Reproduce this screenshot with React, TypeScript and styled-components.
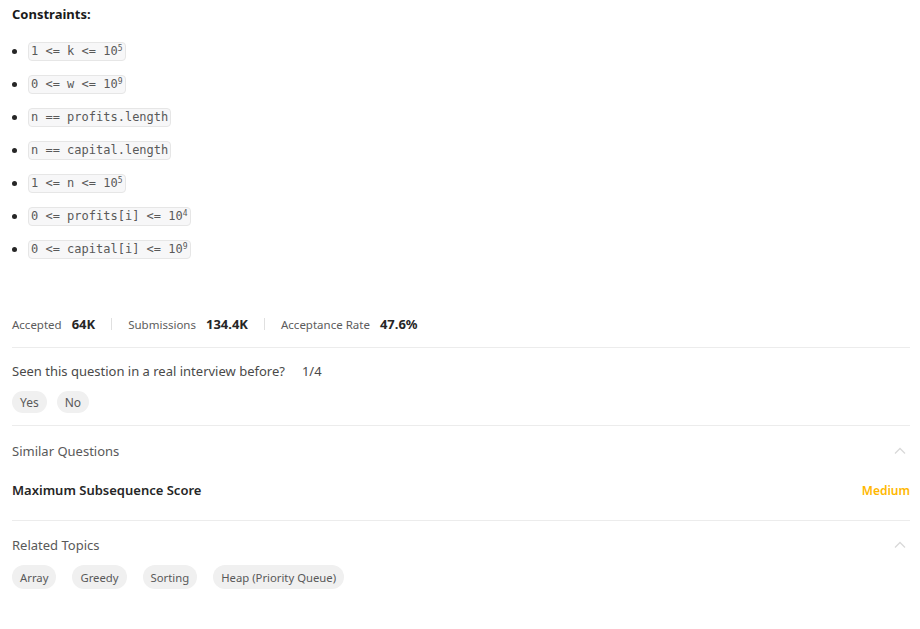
import React from "react";
import styled, { createGlobalStyle } from "styled-components";

const Global = createGlobalStyle`
  html, body { margin: 0; padding: 0; background: #fff; }
  body { font-family: "Noto Sans", "Open Sans", sans-serif; color: #262626; }
`;

const Page = styled.div`
  padding: 5px 10px 0 12px;
  width: 920px;
  box-sizing: border-box;
`;

const Heading = styled.div`
  font-weight: 700;
  font-size: 13px;
  line-height: 18px;
  color: #1a1a1a;
`;

const List = styled.ul`
  list-style: none;
  margin: 18px 0 0;
  padding: 0;
  display: flex;
  flex-direction: column;
  gap: 13px;
`;

const Item = styled.li`
  display: flex;
  align-items: center;
  height: 20px;
  &::before {
    content: "";
    width: 5px;
    height: 5px;
    border-radius: 50%;
    background: #262626;
    margin: 0 11px 0 0;
  }
`;

const Code = styled.code`
  font-family: "DejaVu Sans Mono", monospace;
  font-size: 12px;
  line-height: 17px;
  color: #595959;
  background: #f7f7f8;
  border: 1px solid #e6e6e6;
  border-radius: 4px;
  padding: 0 2px;
  sup { font-size: 8px; vertical-align: 4px; line-height: 0; }
`;

const Stats = styled.div`
  margin-top: 54px;
  display: flex;
  align-items: center;
  height: 22px;
`;

const Stat = styled.div`
  display: flex;
  align-items: baseline;
  gap: 10px;
`;

const StatLabel = styled.span`
  font-size: 11.5px;
  color: #5c5c5c;
`;

const StatValue = styled.span`
  font-size: 13px;
  font-weight: 700;
  color: #262626;
`;

const Sep = styled.div`
  width: 1px;
  height: 12px;
  background: #e0e0e0;
  margin: 0 16px;
`;

const Divider = styled.div`
  height: 1px;
  background: #ececec;
`;

const Section = styled.div<{ $pt: number; $pb: number }>`
  padding: ${(p) => p.$pt}px 0 ${(p) => p.$pb}px;
`;

const Question = styled.div`
  font-size: 13px;
  color: #4a4a4a;
  line-height: 20px;
  display: flex;
  gap: 17px;
`;

const Pills = styled.div<{ $gap: number }>`
  display: flex;
  gap: ${(p) => p.$gap}px;
  margin-top: 10px;
`;

const Pill = styled.span<{ $h: number; $px: number; $fs: number }>`
  display: inline-flex;
  align-items: center;
  height: ${(p) => p.$h}px;
  padding: 0 ${(p) => p.$px}px;
  border-radius: 999px;
  background: #f0f0f0;
  font-size: ${(p) => p.$fs}px;
  color: #595959;
`;

const TitleRow = styled.div`
  display: flex;
  justify-content: space-between;
  align-items: center;
  height: 20px;
`;

const Title = styled.div`
  font-size: 13px;
  color: #595959;
`;

const QRow = styled.div`
  display: flex;
  justify-content: space-between;
  align-items: center;
  margin-top: 19px;
  height: 20px;
`;

const QName = styled.div`
  font-size: 13px;
  font-weight: 600;
  color: #262626;
`;

const Medium = styled.div`
  font-size: 12px;
  font-weight: 600;
  color: #ffb800;
`;

const Chevron = () => (
  <svg width="14" height="14" viewBox="0 0 14 14" fill="none" style={{ marginRight: 3 }}>
    <path d="M2 9.5 L7 4.5 L12 9.5" stroke="#d9d9d9" strokeWidth="1.3" />
  </svg>
);

const constraints: React.ReactNode[] = [
  <>1 &lt;= k &lt;= 10<sup>5</sup></>,
  <>0 &lt;= w &lt;= 10<sup>9</sup></>,
  <>n == profits.length</>,
  <>n == capital.length</>,
  <>1 &lt;= n &lt;= 10<sup>5</sup></>,
  <>0 &lt;= profits[i] &lt;= 10<sup>4</sup></>,
  <>0 &lt;= capital[i] &lt;= 10<sup>9</sup></>,
];

const topics = ["Array", "Greedy", "Sorting", "Heap (Priority Queue)"];

export default function App() {
  return (
    <>
      <Global />
      <Page>
        <Heading>Constraints:</Heading>
        <List>
          {constraints.map((c, i) => (
            <Item key={i}>
              <Code>{c}</Code>
            </Item>
          ))}
        </List>
        <Stats>
          <Stat>
            <StatLabel>Accepted</StatLabel>
            <StatValue>64K</StatValue>
          </Stat>
          <Sep />
          <Stat>
            <StatLabel>Submissions</StatLabel>
            <StatValue>134.4K</StatValue>
          </Stat>
          <Sep />
          <Stat>
            <StatLabel>Acceptance Rate</StatLabel>
            <StatValue>47.6%</StatValue>
          </Stat>
        </Stats>
        <Section $pt={12} $pb={13}>
          <Divider />
        </Section>
        <Question>
          <span>Seen this question in a real interview before?</span>
          <span>1/4</span>
        </Question>
        <Pills $gap={10}>
          <Pill $h={22} $px={8} $fs={12}>Yes</Pill>
          <Pill $h={22} $px={8} $fs={12}>No</Pill>
        </Pills>
        <Section $pt={12} $pb={15}>
          <Divider />
        </Section>
        <TitleRow>
          <Title>Similar Questions</Title>
          <Chevron />
        </TitleRow>
        <QRow>
          <QName>Maximum Subsequence Score</QName>
          <Medium>Medium</Medium>
        </QRow>
        <Section $pt={20} $pb={14}>
          <Divider />
        </Section>
        <TitleRow>
          <Title>Related Topics</Title>
          <Chevron />
        </TitleRow>
        <Pills $gap={16}>
          {topics.map((t) => (
            <Pill key={t} $h={24} $px={8} $fs={11.3}>
              {t}
            </Pill>
          ))}
        </Pills>
      </Page>
    </>
  );
}
